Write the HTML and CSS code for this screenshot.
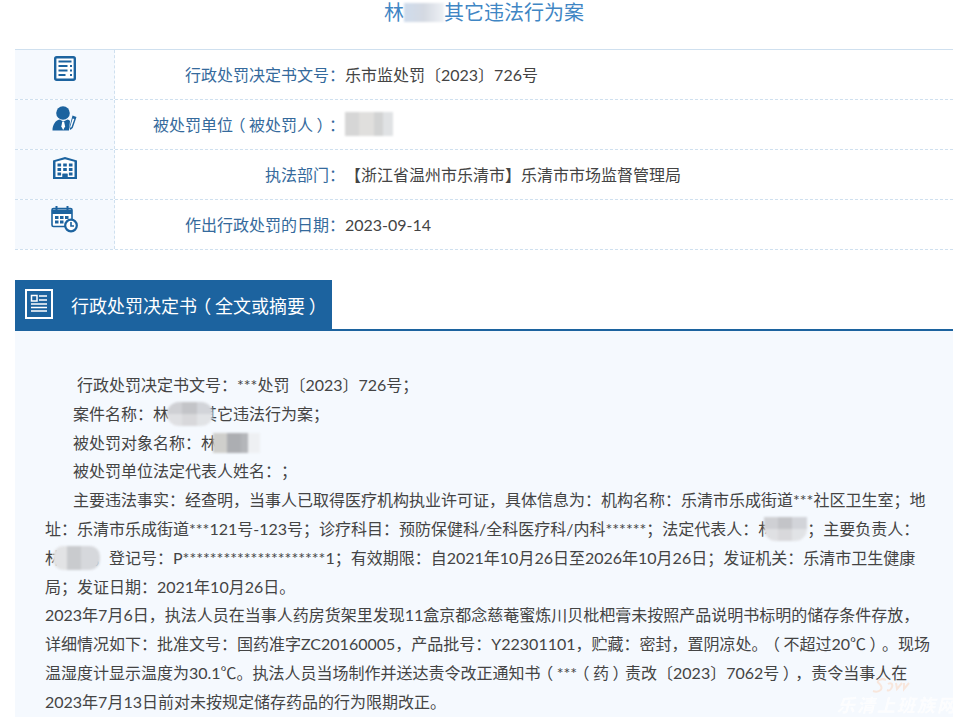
FILE: index.html
```html
<!DOCTYPE html>
<html lang="zh-CN">
<head>
<meta charset="utf-8">
<title>其它违法行为案</title>
<link rel="stylesheet" href="styles.css">
</head>
<body>
<div class="page">
  <h1 class="title">林<span class="blur blur-title"></span>其它违法行为案</h1>

  <div class="info">
    <div class="row">
      <div class="ico">
        <svg width="22" height="25" viewBox="0 0 22 25"><rect x="1.2" y="1.2" width="19.6" height="22.6" rx="1.5" fill="#fff" stroke="#1c639f" stroke-width="2.4"/><path d="M4.500 5.500h13M4.500 10h9M4.500 14.500h9M4.500 19h7M16 10h2M16 14.500h2M16 19h2" stroke="#1c639f" stroke-width="2" fill="none"/></svg>
      </div>
      <div class="label">行政处罚决定书文号：</div>
      <div class="value">乐市监处罚〔2023〕726号</div>
    </div>
    <div class="row">
      <div class="ico">
        <svg width="26" height="25" viewBox="0 0 26 25"><circle cx="11" cy="7" r="6.800" fill="#1c639f"/><path d="M0.500 24.500c0-6 3-10 7-11l3 1.500h2l3-1.500c1 .3 2 .8 2.500 1.500l-1 9.500z" fill="#1c639f"/><path d="M10.300 15.500h1.800l1 5-1.900 3.500-1.900-3.500z" fill="#fff"/><path d="M20.500 9.500l4 1.500-3.800 11-2.400 2-.8-3z" fill="#1c639f"/><path d="M20.700 12.500l1.600.6-2.800 8-1 .8-.3-1.200z" fill="#fff"/></svg>
      </div>
      <div class="label">被处罚单位<span class="pc">（</span>被处罚人<span class="pc">）</span>：</div>
      <div class="value"><span class="blur blur-name"></span></div>
    </div>
    <div class="row">
      <div class="ico">
        <svg width="26" height="24" viewBox="0 0 26 24"><path d="M1 4.500 13 1l12 3.500V23H1z" fill="#1c639f"/><path d="M3.500 5.800 13 3.200l9.500 2.600V21h-7v-3.500h-5V21h-7z" fill="#fff"/><path d="M5.500 7.500h3.600v3H5.500zM11.200 7.500h3.600v3h-3.600zM16.900 7.500h3.600v3h-3.600zM5.500 12h3.600v3H5.500zM11.200 12h3.600v3h-3.600zM16.900 12h3.600v3h-3.600zM5.500 16.500h3.600v3H5.500zM16.900 16.500h3.600v3h-3.600z" fill="#1c639f"/><path d="M10.500 18h5v5h-5z" fill="#1c639f"/></svg>
      </div>
      <div class="label">执法部门：</div>
      <div class="value">【浙江省温州市乐清市】乐清市市场监督管理局</div>
    </div>
    <div class="row">
      <div class="ico ico-cal">
        <svg width="27" height="28" viewBox="0 0 27 28"><rect x="1" y="3.500" width="20" height="18" rx="1.500" fill="#fff" stroke="#1c639f" stroke-width="1.600"/><path d="M1 4.500h20V9H1z" fill="#1c639f"/><path d="M5.500 1v5M16.500 1v5" stroke="#1c639f" stroke-width="2"/><path d="M4 11h3.500v3H4zM9 11h3.500v3H9zM14 11h3.500v3H14zM4 15.500h3.500v3H4zM9 15.500h3.500v3H9z" fill="#1c639f"/><circle cx="20" cy="20.500" r="5.800" fill="#fff" stroke="#1c639f" stroke-width="2.200"/><path d="M20 17v4h3" stroke="#1c639f" stroke-width="1.600" fill="none"/></svg>
      </div>
      <div class="label">作出行政处罚的日期：</div>
      <div class="value">2023-09-14</div>
    </div>
  </div>

  <div class="head">
    <div class="head-tab">
      <svg width="28" height="30" viewBox="0 0 28 30"><rect x="1" y="1" width="26" height="28" fill="none" stroke="#fff" stroke-width="2"/><path d="M6.500 6.500h5.500v5.500H6.500z" fill="none" stroke="#fff" stroke-width="1.500"/><path d="M14 7h8M14 11h8M6 15h16M6 18.500h16M6 22h16" stroke="#fff" stroke-width="1.600"/></svg>
      <h2 class="head-title">行政处罚决定书<span class="pc">（</span>全文或摘要<span class="pc">）</span></h2>
    </div>
  </div>

  <div class="panel">
    <p class="ind-first">行政处罚决定书文号：***处罚〔2023〕726号；</p>
    <p class="ind">案件名称：林<span class="blur blur-case"></span>其它违法行为案；</p>
    <p class="ind">被处罚对象名称：林<span class="blur blur-target"></span></p>
    <p class="ind">被处罚单位法定代表人姓名：；</p>
    <p class="ind">主要违法事实：经查明，当事人已取得医疗机构执业许可证，具体信息为：机构名称：乐清市乐成街道***社区卫生室；地址：乐清市乐成街道***121号-123号；诊疗科目：预防保健科/全科医疗科/内科******；法定代表人：林<span class="blur blur-rep"></span>；主要负责人：林<span class="blur blur-lead"></span>，登记号：P*********************1；有效期限：自2021年10月26日至2026年10月26日；发证机关：乐清市卫生健康局；发证日期：2021年10月26日。</p>
    <p>2023年7月6日，执法人员在当事人药房货架里发现11盒京都念慈菴蜜炼川贝枇杷膏未按照产品说明书标明的储存条件存放，详细情况如下：批准文号：国药准字ZC20160005，产品批号：Y22301101，贮藏：密封，置阴凉处。<span class="pc">（</span>不超过20℃<span class="pc">）</span>。现场温湿度计显示温度为30.1℃。执法人员当场制作并送达责令改正通知书<span class="pc">（</span>***<span class="pc">（</span>药<span class="pc">）</span>责改〔2023〕7062号<span class="pc">）</span>，责令当事人在2023年7月13日前对未按规定储存药品的行为限期改正。</p>
  </div>

  <svg class="mark-logo" width="40" height="16" viewBox="0 0 40 16"><path d="M1 13c5 2 10-1 8-5S4 5 7 2c2-1 5-1 7 0M16 6c3-2 5 0 4 3s-3 4-5 3M24 5l1 6 5-6M32 5v6l5-6" fill="none" stroke="#f8e6dc" stroke-width="2"/></svg>
  <div class="mark">乐清上班族网</div>
</div>
</body>
</html>
```

FILE: styles.css
```css
* { box-sizing: border-box; }
html, body { margin: 0; padding: 0; background: #fff; }
body { font-family: "Lato", "Noto Sans CJK TC", "Noto Sans CJK SC", sans-serif; color: #444; text-spacing-trim: space-all; }
.page { width: 961px; height: 717px; overflow: hidden; padding: 0 8px 0 15px; position: relative; }
.title { margin: 0; height: 49px; font-size: 20px; font-weight: 400; line-height: 24px; text-align: center; color: #3f86c4; }
.info { border-top: 1px solid #cfe0ef; }
.row { display: grid; grid-template-columns: 100px 230px 1fr; height: 50px; border-bottom: 1px dashed #cfe0ef; align-items: center; font-size: 16px; line-height: 24px; }
.ico { height: 49px; background: #f5f9fe; border-right: 1px dashed #cfe0ef; display: flex; justify-content: center; padding-top: 6px; }
.ico-cal { padding-top: 5px; }
.label { text-align: right; color: #356a9c; }
.value { color: #444; }
.pc { display: inline-block; width: 1em; text-align: center; text-indent: 0; font-feature-settings: "palt"; }
.head { margin-top: 30px; height: 51px; border-bottom: 2px solid #1c639f; }
.head-tab { display: flex; align-items: center; width: 317px; height: 50px; background: #1c639f; padding-left: 10px; gap: 18px; padding-bottom: 2px; }
.head-title { margin: 2px 0 0; font-size: 18px; font-weight: 400; color: #fff; white-space: nowrap; }
.panel { background: #f5f9fe; padding: 40px 19px 40px 30px; font-size: 16px; line-height: 28.8px; height: 400px; }
.panel p { margin: 0; }
.ind-first { text-indent: 32px; }
.ind { text-indent: 28px; }
.blur { display: inline-block; position: relative; vertical-align: middle; height: 24px; margin-top: -4px; text-indent: 0; filter: blur(1px); background: linear-gradient(180deg, transparent 50%, rgba(255,255,255,.35) 50%), linear-gradient(90deg, #cfd0d4 0 33%, #c3c4c8 33% 66%, #d2d4d9 66%); }
.blur-title { width: 40px; height: 19px; background: linear-gradient(90deg, #cfdcec, #d4d9e2 50%, #eef1f5); }
.blur-name { width: 48px; background: linear-gradient(90deg, #d6d6d6 0 30%, #e0dfdd 30% 60%, #d2d3d3 60% 80%, #e0e2e4 80%); }
.blur-case { width: 46px; margin-left: -2px; margin-right: -12px; border-radius: 12px; }
.blur-target { width: 47px; height: 20px; margin-left: -4px; background: linear-gradient(90deg, #cfcfcc 0 30%, #acaeb2 30% 60%, #b4b6ba 60% 75%, #eef0f3 75%); }
.blur-rep { width: 43px; margin-left: -10px; border-radius: 0 0 12px 12px; }
.blur-lead { width: 47px; margin-left: -8px; margin-right: -7px; border-radius: 10px; background: linear-gradient(90deg, #e2e3e5 0 30%, #c9cbce 30% 60%, #d6d8dc 60%); }
.mark-logo { position: absolute; left: 872px; top: 678px; }
.mark { position: absolute; right: 4px; bottom: 2px; line-height: 20px; font-size: 18px; font-weight: 700; font-style: italic; color: #fff; opacity: .8; letter-spacing: 2px; }
```
